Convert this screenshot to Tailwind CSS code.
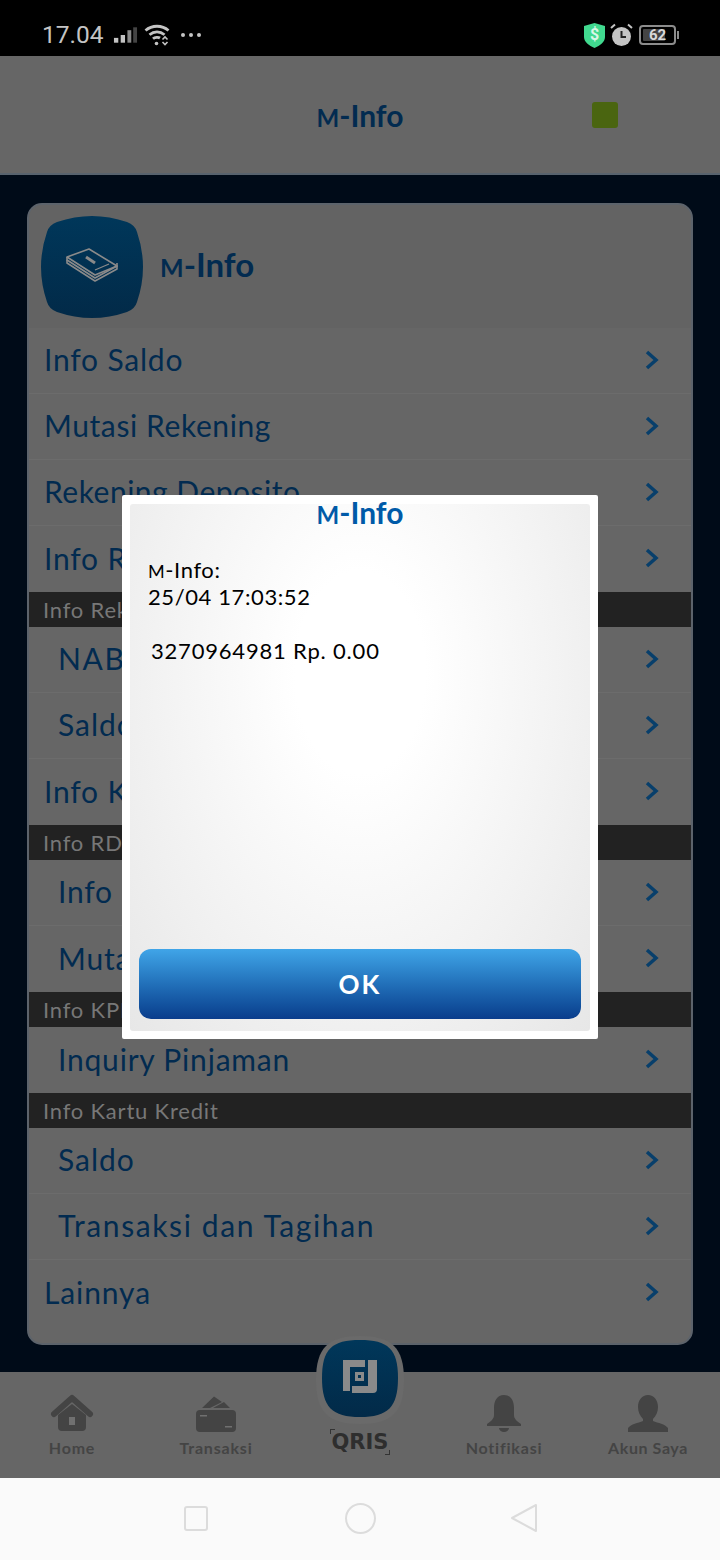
<!DOCTYPE html>
<html><head><meta charset="utf-8"><script src="https://cdn.jsdelivr.net/npm/@tailwindcss/browser@4"></script></head>
<body class="bg-black">
<div class="relative w-[720px] h-[1560px] overflow-hidden flex flex-col font-['Lato',sans-serif]">

  <!-- status bar -->
  <div class="h-14 bg-black flex items-center pl-[42px] pr-[44px] pt-[14px] shrink-0">
    <span class="font-['Roboto',sans-serif] text-[24.5px] leading-none text-[#c4c4c4]">17.04</span>
    <svg class="ml-[9px]" width="25" height="18" viewBox="0 0 26 18"><rect x="1" y="12" width="4.500" height="5" fill="#c4c4c4"/><rect x="8" y="9" width="4.500" height="8" fill="#c4c4c4"/><rect x="15" y="4" width="4" height="13" fill="#8a8a8a"/><rect x="21" y="1" width="4" height="16" fill="#444"/></svg>
    <svg class="ml-[6px]" width="26" height="22" viewBox="0 0 26 22" fill="none" stroke="#c4c4c4" stroke-width="2.800"><path d="M1.500 6.500C8 .8 18 .8 24.500 6.500"/><path d="M5.500 10.800C10 7 16 7 20.500 10.800"/><path d="M9 14.800C11 13 14.500 13 16 14"/><circle cx="12.500" cy="19.500" r="1.800" fill="#c4c4c4" stroke="none"/><path d="M18.500 15.500l2.500-2.500 2.500 2.500M18.500 18l2.500 2.500 2.500-2.500" stroke-width="1.600"/></svg>
    <div class="ml-[11px] flex gap-[4px]"><span class="w-[4px] h-[4px] rounded-full bg-[#c4c4c4]"></span><span class="w-[4px] h-[4px] rounded-full bg-[#c4c4c4]"></span><span class="w-[4px] h-[4px] rounded-full bg-[#c4c4c4]"></span></div>
    <div class="ml-auto flex items-center">
      <div class="relative w-[21px] h-[25px] flex items-center justify-center">
        <svg class="absolute inset-0" width="21" height="25" viewBox="0 0 21 25"><path d="M10.500 0L21 3v11c0 5-5 8.500-10.500 11C5 22.500 0 19 0 14V3z" fill="#41d98f"/></svg>
        <span class="relative font-['Roboto',sans-serif] font-bold text-[16px] leading-none text-[#d9f7e8]">$</span>
      </div>
      <svg class="ml-[5px]" width="23" height="24" viewBox="0 0 23 24"><circle cx="11.500" cy="13.500" r="9.500" fill="#c4c4c4"/><path d="M11.500 8v6h4.500" fill="none" stroke="#222" stroke-width="2"/><path d="M1 5l4-3.500M22 5l-4-3.500" stroke="#c4c4c4" stroke-width="2"/></svg>
      <div class="ml-[6px] relative w-[37px] h-[20px] border-2 border-[#8c8c8c] rounded-[4px] flex items-center p-[2px]">
        <div class="absolute left-[2px] top-[2px] bottom-[2px] w-[22px] bg-[#444] rounded-[1px]"></div>
        <span class="relative w-full text-center font-['Roboto',sans-serif] font-bold text-[15px] leading-none text-[#d8d8d8]">62</span>
        <span class="absolute -right-[5px] top-[4px] w-[2px] h-[8px] bg-[#8c8c8c]"></span>
      </div>
    </div>
  </div>

  <!-- app header -->
  <div class="relative h-[119px] bg-[#666] border-b-2 border-[#58636e] flex items-center justify-center shrink-0">
    <h1 class="text-[30px] leading-none font-bold text-[#022b50]"><span class="text-[24px]">M</span>-Info</h1>
    <span class="absolute left-[592px] top-[46px] w-[26px] h-[26px] rounded-[3px] bg-[#4a6510]"></span>
  </div>

  <!-- main -->
  <div class="flex-1 bg-[#000b18] px-[27px] pt-[28px]">
    <div class="h-[1142px] rounded-[15px] border-2 border-[#5c636b] bg-[#666] overflow-hidden">
      <div class="h-[123px] bg-[#636363] flex items-center pl-[12px]">
        <svg width="102" height="102" viewBox="0 0 102 102">
          <defs><linearGradient id="g1" x1="0" y1="0" x2="0" y2="1"><stop offset="0" stop-color="#00375a"/><stop offset="1" stop-color="#022a48"/></linearGradient></defs>
          <path d="M16 6Q51 -6 86 6Q94 9 96 16Q108 51 96 86Q94 93 86 96Q51 108 16 96Q8 93 6 86Q-6 51 6 16Q8 9 16 6Z" fill="url(#g1)"/>
          <g fill="none" stroke="#8a8a8a" stroke-width="1.600" stroke-linejoin="round"><path d="M26 41L48 33 76 50 54 59Z"/><path d="M26 41v3l28 18 22-12v-3"/><path d="M26 44v3l28 18 22-12v-3"/></g>
          <path d="M45 41l9 6" stroke="#8a8a8a" stroke-width="3"/><path d="M54 54l14-6" stroke="#8a8a8a" stroke-width="1.200"/>
        </svg>
        <h2 class="ml-[17px] mb-[5px] text-[33px] leading-none font-bold text-[#022b50]"><span class="text-[25px]">M</span>-Info</h2>
      </div>
      <a class="flex h-[66px] items-center justify-between border-b border-[#6c6c6c] pb-[2px] pl-[15px] pr-[32px] text-[#022b50] text-[30px] tracking-[0.8px]">Info Saldo<svg width="14" height="20" viewBox="0 0 14 20" fill="none" stroke="#083f6b" stroke-width="3.500"><path d="M2 2l9 8-9 8"/></svg></a>
      <a class="flex h-[66px] items-center justify-between border-b border-[#6c6c6c] pb-[2px] pl-[15px] pr-[32px] text-[#022b50] text-[30px] tracking-[0.6px]">Mutasi Rekening<svg width="14" height="20" viewBox="0 0 14 20" fill="none" stroke="#083f6b" stroke-width="3.500"><path d="M2 2l9 8-9 8"/></svg></a>
      <a class="flex h-[66px] items-center justify-between border-b border-[#6c6c6c] pb-[2px] pl-[15px] pr-[32px] text-[#022b50] text-[30px] tracking-[0.5px]">Rekening Deposito<svg width="14" height="20" viewBox="0 0 14 20" fill="none" stroke="#083f6b" stroke-width="3.500"><path d="M2 2l9 8-9 8"/></svg></a>
      <a class="flex h-[66px] items-center justify-between pb-[2px] pl-[15px] pr-[32px] text-[#022b50] text-[30px] tracking-[0.8px]">Info Reksa Dana<svg width="14" height="20" viewBox="0 0 14 20" fill="none" stroke="#083f6b" stroke-width="3.500"><path d="M2 2l9 8-9 8"/></svg></a>
      <div class="flex h-[35px] items-center bg-[#222] pl-[14px] text-[22px] tracking-[0.8px] text-[#777]">Info Reksa Dana</div>
      <a class="flex h-[66px] items-center justify-between border-b border-[#6c6c6c] pb-[2px] pl-[29px] pr-[32px] text-[#022b50] text-[30px] tracking-[1.6px]">NAB<svg width="14" height="20" viewBox="0 0 14 20" fill="none" stroke="#083f6b" stroke-width="3.500"><path d="M2 2l9 8-9 8"/></svg></a>
      <a class="flex h-[66px] items-center justify-between border-b border-[#6c6c6c] pb-[2px] pl-[29px] pr-[32px] text-[#022b50] text-[30px] tracking-[1px]">Saldo<svg width="14" height="20" viewBox="0 0 14 20" fill="none" stroke="#083f6b" stroke-width="3.500"><path d="M2 2l9 8-9 8"/></svg></a>
      <a class="flex h-[66px] items-center justify-between pb-[2px] pl-[15px] pr-[32px] text-[#022b50] text-[30px] tracking-[0.8px]">Info KPR<svg width="14" height="20" viewBox="0 0 14 20" fill="none" stroke="#083f6b" stroke-width="3.500"><path d="M2 2l9 8-9 8"/></svg></a>
      <div class="flex h-[35px] items-center bg-[#222] pl-[14px] text-[22px] tracking-[0.8px] text-[#777]">Info RDN</div>
      <a class="flex h-[66px] items-center justify-between border-b border-[#6c6c6c] pb-[2px] pl-[29px] pr-[32px] text-[#022b50] text-[30px] tracking-[0.8px]">Info Saldo<svg width="14" height="20" viewBox="0 0 14 20" fill="none" stroke="#083f6b" stroke-width="3.500"><path d="M2 2l9 8-9 8"/></svg></a>
      <a class="flex h-[66px] items-center justify-between pb-[2px] pl-[29px] pr-[32px] text-[#022b50] text-[30px] tracking-[0.8px]">Mutasi<svg width="14" height="20" viewBox="0 0 14 20" fill="none" stroke="#083f6b" stroke-width="3.500"><path d="M2 2l9 8-9 8"/></svg></a>
      <div class="flex h-[35px] items-center bg-[#222] pl-[14px] text-[22px] tracking-[0.8px] text-[#777]">Info KPR</div>
      <a class="flex h-[66px] items-center justify-between pb-[2px] pl-[29px] pr-[32px] text-[#022b50] text-[30px] tracking-[0.8px]">Inquiry Pinjaman<svg width="14" height="20" viewBox="0 0 14 20" fill="none" stroke="#083f6b" stroke-width="3.500"><path d="M2 2l9 8-9 8"/></svg></a>
      <div class="flex h-[35px] items-center bg-[#222] pl-[14px] text-[22px] tracking-[0.8px] text-[#777]">Info Kartu Kredit</div>
      <a class="flex h-[66px] items-center justify-between border-b border-[#6c6c6c] pb-[2px] pl-[29px] pr-[32px] text-[#022b50] text-[30px] tracking-[1px]">Saldo<svg width="14" height="20" viewBox="0 0 14 20" fill="none" stroke="#083f6b" stroke-width="3.500"><path d="M2 2l9 8-9 8"/></svg></a>
      <a class="flex h-[66px] items-center justify-between border-b border-[#6c6c6c] pb-[2px] pl-[29px] pr-[32px] text-[#022b50] text-[30px] tracking-[1.6px]">Transaksi dan Tagihan<svg width="14" height="20" viewBox="0 0 14 20" fill="none" stroke="#083f6b" stroke-width="3.500"><path d="M2 2l9 8-9 8"/></svg></a>
      <a class="flex h-[66px] items-center justify-between pb-[2px] pl-[15px] pr-[32px] text-[#022b50] text-[30px] tracking-[0.9px]">Lainnya<svg width="14" height="20" viewBox="0 0 14 20" fill="none" stroke="#083f6b" stroke-width="3.500"><path d="M2 2l9 8-9 8"/></svg></a>
    </div>
  </div>

  <!-- bottom nav -->
  <div class="h-[106px] bg-[#666] grid grid-cols-5 shrink-0 text-[#444] text-[16px] tracking-[0.8px] font-bold">
    <div class="flex flex-col items-center pt-[21px]">
      <svg width="44" height="39" viewBox="0 0 44 39" fill="#444"><path d="M4 21L22 5l18 16" fill="none" stroke="#444" stroke-width="6" stroke-linecap="round" stroke-linejoin="round"/><path d="M8 22L22 11l14 11v12a4 4 0 0 1-4 4H12a4 4 0 0 1-4-4z"/><rect x="19" y="24" width="6" height="8" fill="#707070"/></svg>
      <span class="mt-[6px] leading-[20px]">Home</span>
    </div>
    <div class="flex flex-col items-center pt-[23px]">
      <svg width="40" height="37" viewBox="0 0 40 37" fill="#444"><path d="M6 13L18 1.500 26 7 14 13zM17 13L28 7l6 6z"/><rect x="0" y="15" width="40" height="22" rx="4"/><rect x="4" y="20" width="7" height="1.500" fill="#707070"/><rect x="29" y="31" width="7" height="1.500" fill="#707070"/></svg>
      <span class="mt-[6px] leading-[20px]">Transaksi</span>
    </div>
    <div class="flex flex-col items-center pt-[58px]">
      <div class="relative w-[60px] h-[24px] flex items-center justify-center">
        <span class="font-['DejaVu_Sans',sans-serif] font-bold text-[21px] leading-none tracking-normal text-[#2e2e2e]">QRIS</span>
        <span class="absolute left-0 -top-[1px] w-[5px] h-[5px] border-l border-t border-[#333]"></span>
        <span class="absolute right-0 -bottom-[1px] w-[5px] h-[5px] border-r border-b border-[#333]"></span>
      </div>
    </div>
    <div class="flex flex-col items-center pt-[23px]">
      <svg width="36" height="37" viewBox="0 0 36 37" fill="#444"><path d="M18 0c7 0 10 6 10 13v7c0 4 3 6 7 9v2H1v-2c4-3 7-5 7-9v-7C8 6 11 0 18 0z"/><path d="M13 33h10a5 4 0 0 1-10 0z"/></svg>
      <span class="mt-[6px] leading-[20px]">Notifikasi</span>
    </div>
    <div class="flex flex-col items-center pt-[23px]">
      <svg width="40" height="37" viewBox="0 0 40 37" fill="#444"><path d="M20 0c6 0 10 5 10 12 0 5-2 9-5 12v2c5 2 12 3 15 7v4H0v-4c3-4 10-5 15-7v-2c-3-3-5-7-5-12C10 5 14 0 20 0z"/></svg>
      <span class="mt-[6px] leading-[20px] tracking-[0.6px]">Akun Saya</span>
    </div>
  </div>

  <!-- android nav -->
  <div class="h-[82px] bg-[#fafafa] grid grid-cols-3 w-full px-[114px] items-center justify-items-center shrink-0 pb-[2px]">
    <span class="w-[24px] h-[25px] border-2 border-[#dcdcdc] rounded-[3px]"></span>
    <span class="w-[31px] h-[31px] border-2 border-[#dcdcdc] rounded-full"></span>
    <svg width="28" height="30" viewBox="0 0 28 30" fill="none" stroke="#dcdcdc" stroke-width="2" stroke-linejoin="round"><path d="M26 2v26L2 15z"/></svg>
  </div>

  <!-- QRIS raised button -->
  <div class="absolute left-[316px] top-[1336px]">
    <svg width="88" height="88" viewBox="0 0 88 88">
      <defs><linearGradient id="g2" x1="0" y1="0" x2="0" y2="1"><stop offset="0" stop-color="#00375a"/><stop offset="1" stop-color="#022a48"/></linearGradient></defs>
      <path d="M44 0C76 0 88 12 88 44S76 88 44 88 0 76 0 44 12 0 44 0Z" fill="#6a6a6a"/>
      <path d="M44 4C72 4 82 13 82 42S72 81 44 81 6 71 6 42 16 4 44 4Z" fill="url(#g2)"/>
      <g fill="#8a8a8a"><path d="M27 24h22v7H34v24h-7z"/><path d="M52 24h9v29a4 4 0 0 1-4 4H36v-7h16z"/><path d="M39 36h9v9h-9zM42 39v3h3v-3z" fill-rule="evenodd"/></g>
    </svg>
  </div>

  <!-- dialog -->
  <div class="absolute left-[122px] top-[495px] w-[476px] h-[544px] bg-white rounded-[2px] pl-[8px] pr-[8px] pt-[9px] pb-[8px]">
    <div class="h-full rounded-[3px] bg-[radial-gradient(ellipse_at_50%_32%,#ffffff_20%,#e7e7e7_100%)] flex flex-col px-[9px] pb-[12px]">
      <h3 class="-mt-[2px] text-center text-[30px] leading-[20px] font-bold text-[#005aa8]"><span class="text-[24px]">M</span>-Info</h3>
      <div class="mt-[32px] pl-[9px] text-[22px] leading-[26px] tracking-[0.6px] text-black">
        <p><span class="text-[18px]">M</span>-Info:</p>
        <p>25/04 17:03:52</p>
        <p class="mt-[28px] pl-[3px] tracking-[0.8px]">3270964981 Rp. 0.00</p>
      </div>
      <button class="mt-auto h-[70px] rounded-[12px] bg-gradient-to-b from-[#40a5e8] to-[#0a3d8c] text-white font-bold text-[26px] tracking-[2px]">OK</button>
    </div>
  </div>
</div>
</body></html>
